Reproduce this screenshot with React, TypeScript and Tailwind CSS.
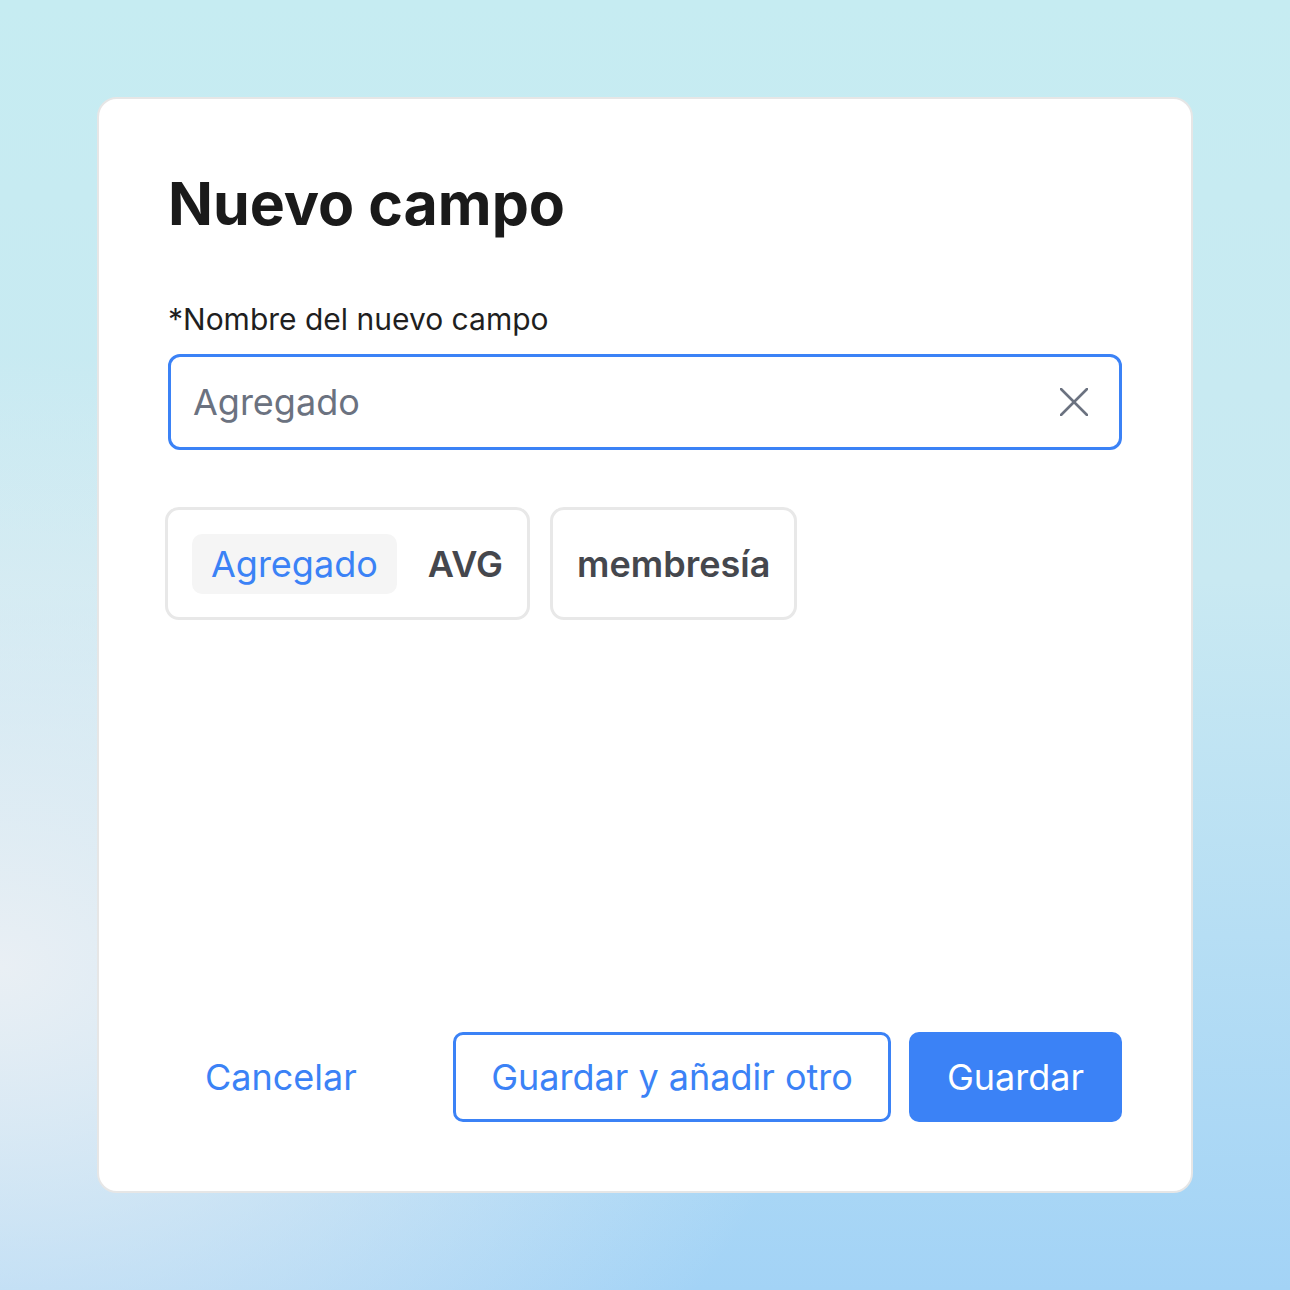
function Chip({ children, active }: { children: string; active?: boolean }) {
  if (active) {
    return (
      <span className="rounded-[10px] bg-[#f5f5f5] px-[19px] py-[9px] text-[36px] leading-[42px] text-[#3b82f6]">
        {children}
      </span>
    );
  }
  return <span className="text-[36px] font-semibold leading-[42px] text-[#45474d]">{children}</span>;
}

export default function App() {
  return (
    <div className="min-h-screen w-full bg-[radial-gradient(ellipse_at_0%_75%,rgba(236,240,244,0.95),transparent_45%),linear-gradient(180deg,#c6ecf2_0%,#c9e9f2_45%,#a3d3f6_100%)] p-[97px] font-['Inter',sans-serif]">
      <div className="flex h-[1096px] flex-col rounded-[20px] border-2 border-[#e6e6e6] bg-white px-[69px] pb-[69px] pt-[75px]">
        <h1 className="text-[59px] font-bold leading-none text-[#1a1a1a]">Nuevo campo</h1>

        <label className="mt-[68px] text-[30px] leading-[36px] text-[#1f1f1f]">*Nombre del nuevo campo</label>

        <div className="mt-[17px] flex h-[96px] items-center justify-between rounded-[12px] border-[3px] border-[#3b82f6] pl-[22px] pr-[31px]">
          <span className="text-[36px] text-[#6b7280]">Agregado</span>
          <svg width="28" height="28" viewBox="0 0 28 28" fill="none" stroke="#6b7280" strokeWidth="2.6" strokeLinecap="round">
            <line x1="1" y1="1" x2="27" y2="27" />
            <line x1="27" y1="1" x2="1" y2="27" />
          </svg>
        </div>

        {/* Opciones */}
        <div className="-ml-[3px] mt-[57px] flex gap-[20px]">
          <div className="flex h-[113px] items-center gap-[31px] rounded-[14px] border-[3px] border-[#e8e8e8] px-[24px]">
            <Chip active>Agregado</Chip>
            <Chip>AVG</Chip>
          </div>
          <div className="flex h-[113px] items-center rounded-[14px] border-[3px] border-[#e8e8e8] px-[24px]">
            <Chip>membresía</Chip>
          </div>
        </div>

        <div className="mt-auto flex items-center justify-between">
          <button className="h-[90px] px-[37px] text-[36px] text-[#3b82f6]">Cancelar</button>
          <div className="flex gap-[18px]">
            <button className="h-[90px] w-[438px] rounded-[10px] border-[3px] border-[#3b82f6] text-[36px] text-[#3b82f6]">
              Guardar y añadir otro
            </button>
            <button className="h-[90px] w-[213px] rounded-[10px] bg-[#3b82f6] text-[36px] text-white">Guardar</button>
          </div>
        </div>
      </div>
    </div>
  );
}
